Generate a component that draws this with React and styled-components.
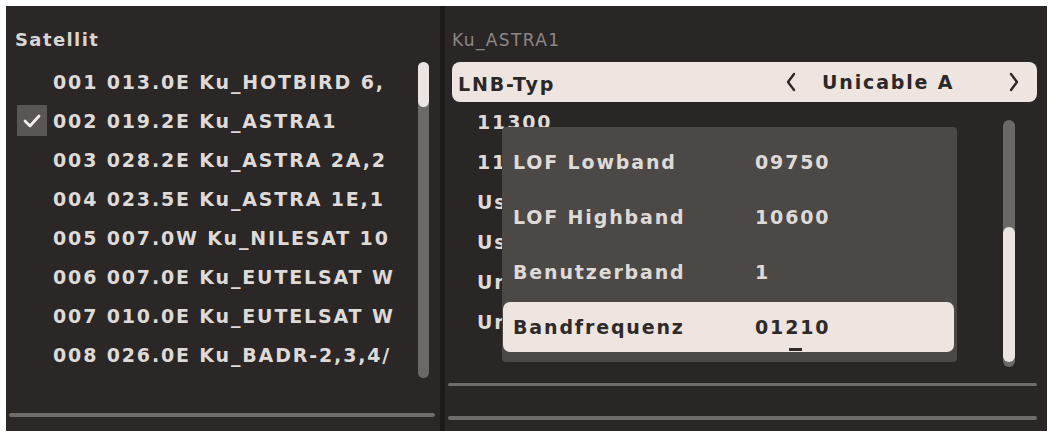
import React from "react";
import styled, { createGlobalStyle } from "styled-components";

const GlobalStyle = createGlobalStyle`
  html, body {
    margin: 0;
    padding: 0;
    background: #ffffff;
  }
  body {
    font-family: "DejaVu Sans", "Liberation Sans", sans-serif;
  }
`;

const satellites = [
  "001 013.0E Ku_HOTBIRD 6,",
  "002 019.2E Ku_ASTRA1",
  "003 028.2E Ku_ASTRA 2A,2",
  "004 023.5E Ku_ASTRA 1E,1",
  "005 007.0W Ku_NILESAT 10",
  "006 007.0E Ku_EUTELSAT W",
  "007 010.0E Ku_EUTELSAT W",
  "008 026.0E Ku_BADR-2,3,4/",
];

const settings = ["11300", "11700", "Usals", "Usals Position", "Unicable", "Unicable Position"];

const unicable = [
  { label: "LOF Lowband", value: "09750" },
  { label: "LOF Highband", value: "10600" },
  { label: "Benutzerband", value: "1" },
  { label: "Bandfrequenz", value: "01210", active: true },
];

const Page = styled.div`
  padding: 6px 4px 4px 6px;
  width: 1051px;
  height: 435px;
  box-sizing: border-box;
`;

const Screen = styled.div`
  display: flex;
  width: 1041px;
  height: 425px;
  background: #292625;
  color: #dedad8;
  font-weight: bold;
  font-size: 19px;
  letter-spacing: 1.85px;
  overflow: hidden;
`;

const LeftPanel = styled.div`
  width: 434px;
  display: flex;
  flex-direction: column;
  background: #2a2726;
`;

const Divider = styled.div`
  width: 5px;
  background: #1c1a19;
`;

const RightPanel = styled.div`
  position: relative;
  flex: 1;
  display: flex;
  flex-direction: column;
  background: #292625;
`;

const PanelTitle = styled.div`
  height: 24px;
  line-height: 24px;
  margin: 22px 0 10px ${(p) => p.$indent}px;
  color: ${(p) => (p.$dim ? "#8b8785" : "#d9d5d3")};
  font-weight: ${(p) => (p.$dim ? "normal" : "bold")};
  font-size: ${(p) => (p.$dim ? "17px" : "18px")};
  letter-spacing: 1.4px;
`;

const ListArea = styled.div`
  display: flex;
  align-items: flex-start;
`;

const List = styled.div`
  flex: 1;
  display: flex;
  flex-direction: column;
  padding-left: ${(p) => p.$indent}px;
  overflow: hidden;
`;

const SatRow = styled.div`
  height: 39px;
  display: flex;
  align-items: center;
  gap: 6px;
  white-space: nowrap;
`;

const Check = styled.div`
  width: 30px;
  height: 31px;
  flex: none;
  display: flex;
  align-items: center;
  justify-content: center;
  background: ${(p) => (p.$on ? "#5a5654" : "transparent")};
`;

const Scrollbar = styled.div`
  flex: none;
  width: ${(p) => p.$w}px;
  height: ${(p) => p.$h}px;
  margin: ${(p) => p.$top}px ${(p) => p.$right}px 0 0;
  border-radius: 6px;
  background: #6c6866;
  position: relative;
`;

const Thumb = styled.div`
  position: absolute;
  left: 0;
  right: 0;
  border-radius: 6px;
  background: #ebe4e1;
`;

const BottomLine = styled.div`
  height: ${(p) => p.$h}px;
  margin: ${(p) => p.$top}px ${(p) => p.$right}px 0 ${(p) => p.$left}px;
  border-radius: 2px;
  background: #706c6a;
`;

const TypeBar = styled.div`
  height: 40px;
  margin: 0 10px 0 7px;
  border-radius: 8px;
  background: #eee4e0;
  color: #2c2827;
  display: flex;
  align-items: center;
  padding: 4px 17px 0 6px;
  box-sizing: border-box;
`;

const TypeLabel = styled.span`
  flex: 1;
`;

const TypeValue = styled.span`
  width: 211px;
  box-sizing: border-box;
  padding-left: 25px;
  padding-bottom: 4px;
`;

const Chevron = styled.svg`
  width: 12px;
  height: 22px;
  margin-bottom: 4px;
`;

const SettingRow = styled.div`
  height: 40px;
  line-height: 40px;
  white-space: nowrap;
`;

const Popup = styled.div`
  position: absolute;
  left: 57px;
  top: 121px;
  width: 455px;
  height: 235px;
  box-sizing: border-box;
  padding: 10px 3px 0 1px;
  border-radius: 4px;
  background: #4c4846;
  display: flex;
  flex-direction: column;
  gap: 5px;
`;

const PopupRow = styled.div`
  height: 50px;
  display: flex;
  align-items: center;
  padding-left: 10px;
  border-radius: 7px;
  background: ${(p) => (p.$active ? "#eee4e0" : "transparent")};
  color: ${(p) => (p.$active ? "#2e2a29" : "#dedad8")};
`;

const PopupLabel = styled.span`
  width: 242px;
`;

const PopupValue = styled.span`
  position: relative;
`;

const Cursor = styled.span`
  position: absolute;
  left: 34px;
  top: 32px;
  width: 13px;
  height: 3px;
  background: #2e2a29;
`;

const ChevronLeft = () => (
  <Chevron viewBox="0 0 12 22">
    <path d="M9 3 L3 11 L9 19" fill="none" stroke="#2c2827" strokeWidth="2.4" strokeLinecap="round" strokeLinejoin="round" />
  </Chevron>
);

const ChevronRight = () => (
  <Chevron viewBox="0 0 12 22">
    <path d="M3 3 L9 11 L3 19" fill="none" stroke="#2c2827" strokeWidth="2.4" strokeLinecap="round" strokeLinejoin="round" />
  </Chevron>
);

const CheckMark = () => (
  <svg width="20" height="16" viewBox="0 0 20 16">
    <path d="M3 8 L8 13 L17 3" fill="none" stroke="#f2eeec" strokeWidth="2.8" strokeLinecap="round" strokeLinejoin="round" />
  </svg>
);

export default function App() {
  return (
    <>
      <GlobalStyle />
      <Page>
        <Screen>
          <LeftPanel>
            <PanelTitle $indent={9}>Satellit</PanelTitle>
            <ListArea>
              <List $indent={11}>
                {satellites.map((s, i) => (
                  <SatRow key={s}>
                    <Check $on={i === 1}>{i === 1 && <CheckMark />}</Check>
                    {s}
                  </SatRow>
                ))}
              </List>
              <Scrollbar $w={11} $h={316} $top={0} $right={11}>
                <Thumb style={{ top: 0, height: 45 }} />
              </Scrollbar>
            </ListArea>
            <BottomLine $h={4} $top={35} $left={3} $right={5} />
          </LeftPanel>
          <Divider />
          <RightPanel>
            <PanelTitle $indent={7} $dim>Ku_ASTRA1</PanelTitle>
            <TypeBar>
              <TypeLabel>LNB-Typ</TypeLabel>
              <ChevronLeft />
              <TypeValue>Unicable A</TypeValue>
              <ChevronRight />
            </TypeBar>
            <ListArea>
              <List $indent={32}>
                {settings.map((s) => (
                  <SettingRow key={s}>{s}</SettingRow>
                ))}
              </List>
              <Scrollbar $w={12} $h={247} $top={18} $right={32}>
                <Thumb style={{ top: 107, height: 135 }} />
              </Scrollbar>
            </ListArea>
            <BottomLine $h={3} $top={16} $left={3} $right={10} />
            <BottomLine $h={4} $top={30} $left={3} $right={10} />
            <Popup>
              {unicable.map((r) => (
                <PopupRow key={r.label} $active={r.active}>
                  <PopupLabel>{r.label}</PopupLabel>
                  <PopupValue>
                    {r.value}
                    {r.active && <Cursor />}
                  </PopupValue>
                </PopupRow>
              ))}
            </Popup>
          </RightPanel>
        </Screen>
      </Page>
    </>
  );
}
